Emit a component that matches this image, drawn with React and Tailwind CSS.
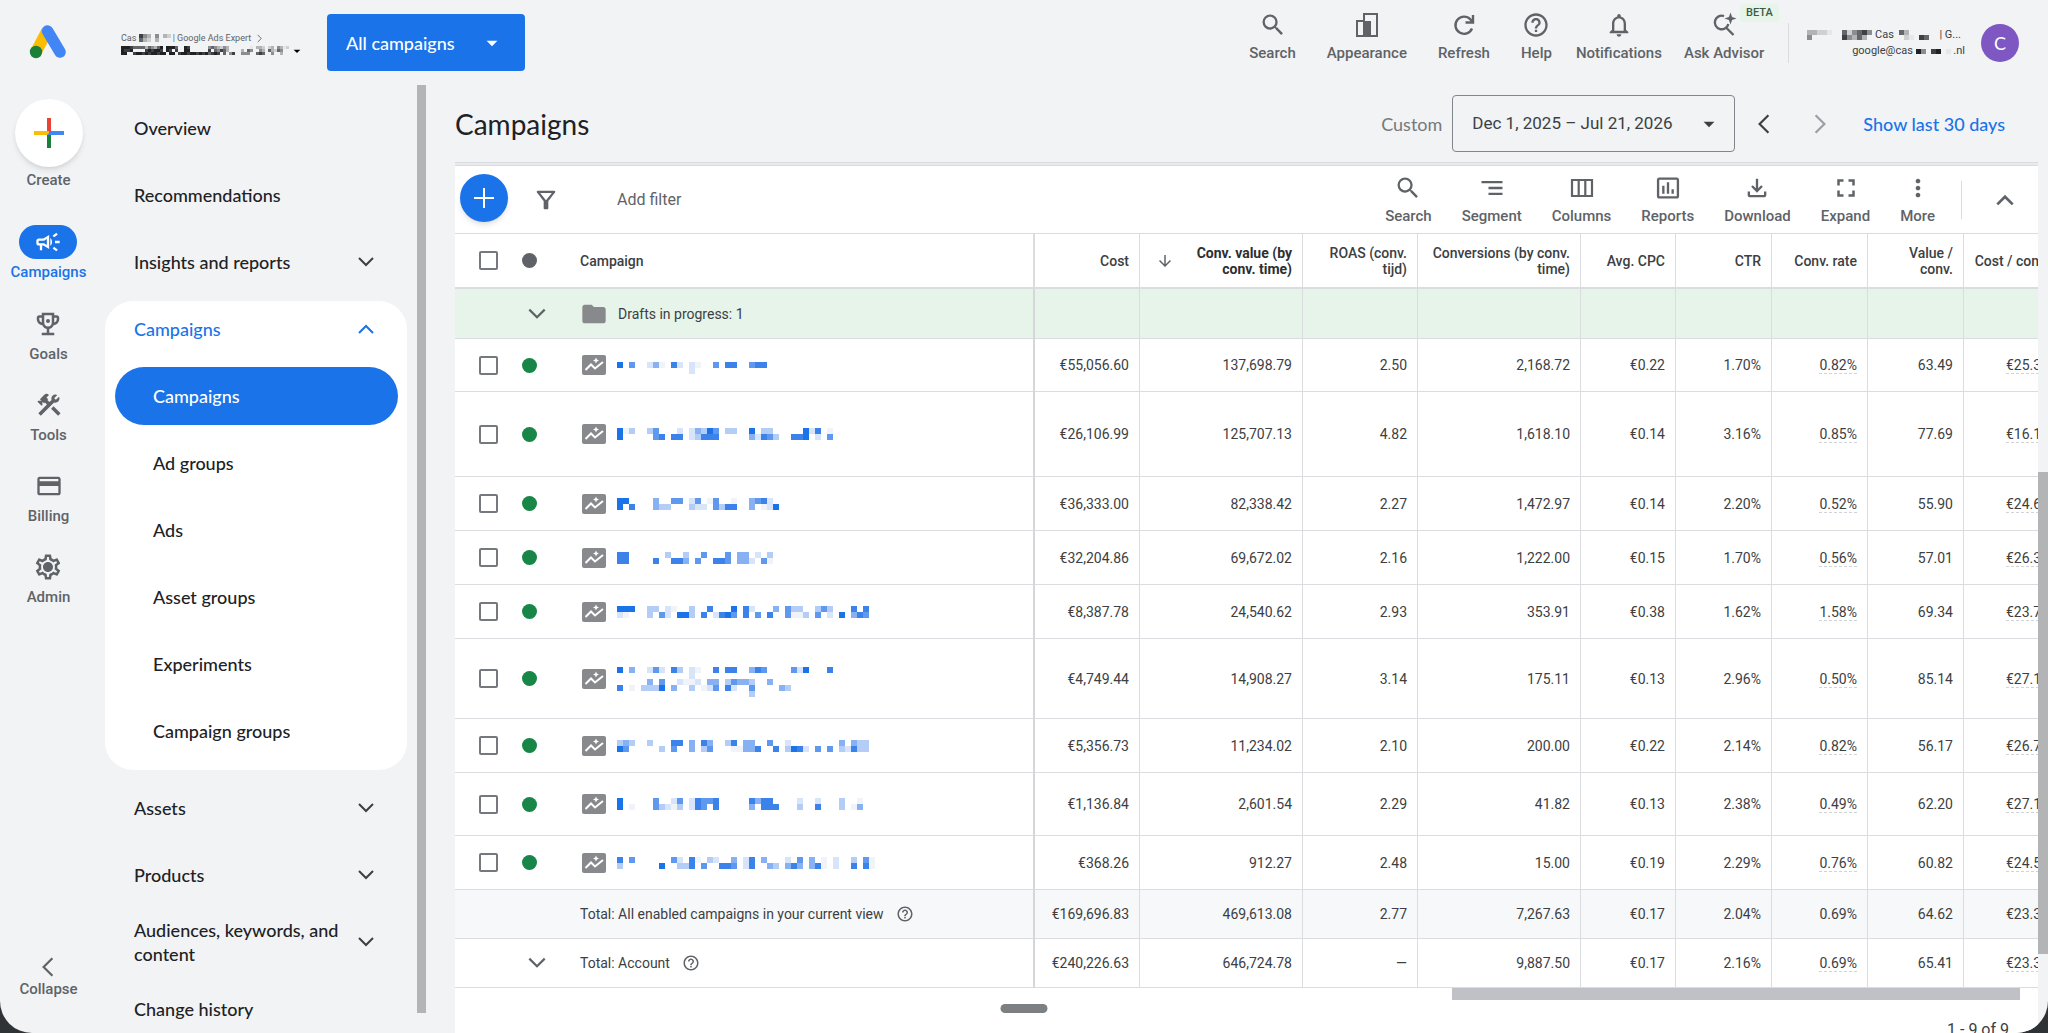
import React from "react";
import {
  MdSearch, MdHelpOutline, MdNotificationsNone, MdSegment, MdOutlineFileDownload,
  MdFullscreen, MdMoreVert, MdFolder, MdOutlineCampaign, MdConstruction, MdOutlineCreditCard,
  MdOutlineEmojiEvents, MdOutlineSettings, MdArrowDropDown, MdArrowDownward, MdInsertChartOutlined,
  MdOutlineFilterAlt,
} from "react-icons/md";

const SHADES = ["", "#f0f3f8", "#d7e4f9", "#b3cdf6", "#87b1f3", "#5e98ef", "#3b82eb", "#1a73e8"];
const GREYS = ["", "#e6e7e9", "#cfd0d2", "#b2b3b6", "#8c8d90", "#65666a", "#3f4044", "#202124"];

function Mosaic({ rows, shades = SHADES, cell = 6 }) {
  const cols = Math.max(...rows.map((r) => r.length));
  return (
    <svg width={cols * cell} height={rows.length * cell} shapeRendering="crispEdges" aria-hidden="true" className="shrink-0">
      {rows.flatMap((row, y) =>
        [...row].map((c, x) =>
          c === "." ? null : <rect key={x + "-" + y} x={x * cell} y={y * cell} width={cell} height={cell} fill={shades[+c]} />
        )
      )}
    </svg>
  );
}

function Chevron({ dir = "down", className = "", size = 20, stroke = 2 }) {
  const d = { down: "M3 6l7 7 7-7", up: "M3 14l7-7 7 7", left: "M14 2l-8 8 8 8", right: "M6 2l8 8-8 8" }[dir];
  return (
    <svg width={size} height={size} viewBox="0 0 20 20" fill="none" stroke="currentColor" strokeWidth={stroke} className={"shrink-0 " + className} aria-hidden="true">
      <path d={d} />
    </svg>
  );
}

function AdsLogo() {
  return (
    <svg width="38" height="36" viewBox="0 0 38 36" aria-label="Google Ads" role="img">
      <path d="M18 7 L7.5 27" stroke="#fbbc04" strokeWidth="11.5" strokeLinecap="butt" />
      <path d="M18.5 7 L31 28" stroke="#4285f4" strokeWidth="11.5" strokeLinecap="round" />
      <circle cx="7" cy="28" r="6.2" fill="#188038" />
    </svg>
  );
}

function AppearanceIcon() {
  return (
    <svg width="26" height="26" viewBox="0 0 26 26" fill="none" stroke="currentColor" strokeWidth="2" aria-hidden="true">
      <path d="M10 9V2h13v22H3V9z" />
      <path d="M9 9h8v15H9z" fill="currentColor" stroke="none" />
    </svg>
  );
}

function RefreshIcon() {
  return (
    <svg width="26" height="26" viewBox="0 0 26 26" fill="none" stroke="currentColor" strokeWidth="2.4" aria-hidden="true">
      <path d="M21 16.5A8.6 8.6 0 1 1 19.5 7.5L21.5 9.8M22 3v7.5h-7.5" />
    </svg>
  );
}

function AdvisorIcon() {
  return (
    <svg width="26" height="26" viewBox="0 0 26 26" fill="none" stroke="currentColor" strokeWidth="2.4" aria-hidden="true">
      <path d="M13 4.1a6.8 6.8 0 1 0 4.3 7.8M15 15.5l7.5 7.5" />
      <path d="M19.5 0.5l1.6 4.4 4.4 1.6-4.4 1.6-1.6 4.4-1.6-4.4-4.4-1.6 4.4-1.6z" fill="currentColor" stroke="none" />
    </svg>
  );
}

function ColumnsIcon() {
  return (
    <svg width="26" height="26" viewBox="0 0 26 26" fill="none" stroke="currentColor" strokeWidth="2.2" aria-hidden="true">
      <path d="M3 5h20v16H3zM9.7 5v16M16.3 5v16" />
    </svg>
  );
}

function CampaignTypeIcon() {
  return (
    <svg width="24" height="20" viewBox="0 0 24 20" className="shrink-0" aria-hidden="true">
      <rect width="24" height="20" rx="2" fill="#87898c" />
      <path d="M3.5 15l5.5-5.5 4 4L21 7" fill="none" stroke="#fff" strokeWidth="2" />
      <path d="M14 2.5l.9 2.1 2.1.9-2.1.9-.9 2.1-.9-2.1-2.1-.9 2.1-.9z" fill="#fff" />
    </svg>
  );
}

const TOP_ACTIONS = [
  ["Search", <MdSearch size={28} />],
  ["Appearance", <AppearanceIcon />],
  ["Refresh", <RefreshIcon />],
  ["Help", <MdHelpOutline size={28} />],
];

const TABLE_ACTIONS = [
  ["Search", <MdSearch size={28} />],
  ["Segment", <MdSegment size={28} />],
  ["Columns", <ColumnsIcon />],
  ["Reports", <MdInsertChartOutlined size={28} />],
  ["Download", <MdOutlineFileDownload size={28} />],
  ["Expand", <MdFullscreen size={30} />],
  ["More", <MdMoreVert size={28} />],
];

const RAIL = [
  ["Goals", <span className="relative"><MdOutlineEmojiEvents size={30} /><span className="absolute top-[10px] left-[13px] size-1 rounded-full bg-[#5f6368]" /></span>],
  ["Tools", <MdConstruction size={28} />],
  ["Billing", <MdOutlineCreditCard size={28} />],
  ["Admin", <span className="relative"><MdOutlineSettings size={30} /><span className="absolute top-[11px] left-[11px] size-2 rounded-full bg-[#5f6368]" /></span>],
];

const COLUMNS = ["Cost", "Conv. value (by conv. time)", "ROAS (conv. tijd)", "Conversions (by conv. time)", "Avg. CPC", "CTR", "Conv. rate", "Value / conv.", "Cost / conv."];

const ROWS = [
  { h: "h-[53px]", m: ["", "7.5..241.62.21..5.66..566", "............2"], v: ["€55,056.60", "137,698.79", "2.50", "2,168.72", "€0.22", "1.70%", "0.82%", "63.49", "€25.39"] },
  { h: "h-[85px]", m: ["713..35...2.24375.33..7.33.....726.1", "7.....56.66.23666.....42653..667.2.5"], v: ["€26,106.99", "125,707.13", "4.82", "1,618.10", "€0.14", "3.16%", "0.85%", "77.69", "€16.13"] },
  { h: "h-[54px]", m: ["77....4..55.25.15..1..4562", "7.6...433...322.5366..4.127"], v: ["€36,333.00", "82,338.42", "2.27", "1,472.97", "€0.14", "2.20%", "0.52%", "55.90", "€24.67"] },
  { h: "h-[54px]", m: ["66......3..3..5...5.44.2.3", "66....6..664.5..665.442.51"], v: ["€32,204.86", "69,672.02", "2.16", "1,222.00", "€0.15", "1.70%", "0.56%", "57.01", "€26.35"] },
  { h: "h-[54px]", m: ["777..33.21..3..6...7.62...4.533..353...6.6", "21...3.52.773.6.2675.6.5.6..5113.5.2.7.465"], v: ["€8,387.78", "24,540.62", "2.93", "353.91", "€0.38", "1.62%", "1.58%", "69.34", "€23.70"] },
  { h: "h-[80px]", m: ["", "7.4..252.63.21..6.66..465....527...6", "............2", ".....4.5..2112.44.35443..4", "6.1.3337.4..3.125.62..5....43", "......................3"], v: ["€4,749.44", "14,908.27", "3.14", "175.11", "€0.13", "2.96%", "0.50%", "85.14", "€27.12"] },
  { h: "h-[54px]", m: ["343..3...66.4.64..36.44..5..2........4.433", "75.....3.5..4.35...11446..6.3762.5.5.32633"], v: ["€5,356.73", "11,234.02", "2.10", "200.00", "€0.22", "2.14%", "0.82%", "56.17", "€26.78"] },
  { h: "h-[63px]", m: ["7.....5..25.26556.....6466....2..2...3..1", "7.1...53213.265.6.....4.666...3..6...3.14"], v: ["€1,136.84", "2,601.54", "2.29", "41.82", "€0.13", "2.38%", "0.49%", "62.20", "€27.18"] },
  { h: "h-[54px]", m: ["6.5......52.61.32..4.26.4...2.5.4.1.2..3.51", "3......7..336.5..665.26..43.464.461.2..6.61"], v: ["€368.26", "912.27", "2.48", "15.00", "€0.19", "2.29%", "0.76%", "60.82", "€24.55"] },
];

const TOTALS = [
  { label: "Total: All enabled campaigns in your current view", bg: "bg-[#f7f8fa]", v: ["€169,696.83", "469,613.08", "2.77", "7,267.63", "€0.17", "2.04%", "0.69%", "64.62", "€23.35"] },
  { label: "Total: Account", expand: true, bg: "bg-white", v: ["€240,226.63", "646,724.78", "—", "9,887.50", "€0.17", "2.16%", "0.69%", "65.41", "€23.38"] },
];

function IconAction({ label, icon, children }) {
  return (
    <button type="button" className="relative flex flex-col items-center text-[#5f6368]">
      <span className="flex h-7 items-center">{icon}</span>
      <span className="mt-1 text-[15px] leading-5 font-medium whitespace-nowrap">{label}</span>
      {children}
    </button>
  );
}

function RailItem({ label, icon }) {
  return (
    <button type="button" className="flex h-[81px] flex-col items-center text-[#5f6368]">
      <span className="flex h-[34px] items-center">{icon}</span>
      <span className="mt-[3px] text-[15px] leading-5 font-medium">{label}</span>
    </button>
  );
}

function NavGroup({ label }) {
  return (
    <button type="button" className="flex h-[67px] w-full items-center justify-between pr-[31px] pl-[29px] text-left">
      <span className="max-w-[215px]">{label}</span>
      <Chevron className="text-[#3c4043]" />
    </button>
  );
}

function Num({ children, dashed }) {
  return (
    <td className="border-r border-b border-[#dadce0] px-[10px] text-right">
      <span className={dashed ? "border-b border-dashed border-[#d0d3d7]" : ""}>{children}</span>
    </td>
  );
}

const NAME_EDGE = "border-r-2 border-b border-r-[#d5d6da] border-b-[#dadce0]";

function CampaignTable() {
  return (
    <table className="w-[calc(100%+22px)] table-fixed border-separate border-spacing-0 text-sm leading-4 text-[#3c4043]">
      <colgroup>
        <col className="w-[125px]" />
        <col />
        <col className="w-[105px]" />
        <col className="w-[163px]" />
        <col className="w-[115px]" />
        <col className="w-[163px]" />
        <col className="w-[95px]" />
        <col className="w-24" />
        <col className="w-24" />
        <col className="w-24" />
        <col className="w-24" />
      </colgroup>
      <thead>
        <tr className="h-[55px] text-[#3c4043]">
          <th className="border-b-2 border-[#dadce0] pl-6">
            <span className="flex items-center gap-6">
              <input type="checkbox" aria-label="Select all campaigns" className="size-[19px] appearance-none rounded-xs border-2 border-[#75787c]" />
              <span className="size-[15px] rounded-full bg-[#5f6368]" />
            </span>
          </th>
          <th className="border-r-2 border-b-2 border-[#dadce0] text-left font-medium">Campaign</th>
          {COLUMNS.map((c, i) => (
            <th key={c} className="border-r border-b-2 border-[#dadce0] px-[10px] text-right font-medium">
              {i === 1 ? (
                <span className="flex items-center gap-2 pl-1.5">
                  <MdArrowDownward size={18} className="shrink-0 text-[#5f6368]" />
                  <span className="flex-1 font-bold text-[#2d2f33]">{c}</span>
                </span>
              ) : (
                <span className={i === 8 ? "whitespace-nowrap" : ""}>{c}</span>
              )}
            </th>
          ))}
        </tr>
      </thead>
      <tbody>
        <tr className="h-[50px] bg-[#e6f4ea]">
          <td className="border-b border-[#dadce0] pl-[71px]">
            <button type="button" aria-label="Expand drafts" className="block text-[#5f6368]"><Chevron size={22} /></button>
          </td>
          <td className={NAME_EDGE}>
            <span className="flex items-center gap-[10px]">
              <MdFolder size={28} className="text-[#87898c]" />
              Drafts in progress: 1
            </span>
          </td>
          {COLUMNS.map((c) => <td key={c} className="border-r border-b border-[#dadce0]" />)}
        </tr>
        {ROWS.map((r, i) => (
          <tr key={i} className={r.h}>
            <td className="border-b border-[#dadce0] pl-6">
              <span className="flex items-center gap-6">
                <input type="checkbox" aria-label={"Select campaign " + (i + 1)} className="size-[19px] appearance-none rounded-xs border-2 border-[#75787c]" />
                <span className="size-[15px] rounded-full bg-[#188647]" />
              </span>
            </td>
            <td className={NAME_EDGE}>
              <a href="#campaign" className="flex items-center gap-[11px] pl-0.5" aria-label={"Campaign " + (i + 1)}>
                <CampaignTypeIcon />
                <Mosaic rows={r.m} />
              </a>
            </td>
            {r.v.map((v, j) => <Num key={j} dashed={j === 6 || j === 8}>{v}</Num>)}
          </tr>
        ))}
        {TOTALS.map((t) => (
          <tr key={t.label} className={"h-[49px] " + t.bg}>
            <td className="border-b border-[#dadce0] pl-[71px]">
              {t.expand && <button type="button" aria-label="Expand account total" className="block text-[#5f6368]"><Chevron size={22} /></button>}
            </td>
            <td className={NAME_EDGE}>
              <span className="flex items-center gap-3">
                {t.label}
                <MdHelpOutline size={18} className="text-[#5f6368]" />
              </span>
            </td>
            {t.v.map((v, j) => <Num key={j} dashed={t.expand && (j === 6 || j === 8)}>{v}</Num>)}
          </tr>
        ))}
      </tbody>
    </table>
  );
}

const ACCOUNT_NAME = [
  "77765555354357.7775..76......4543243.......1.332.23.4312",
  "7667....676776.76.6..77......6.54653....3.54..43.53254..",
  "77..67767677677.77.67767767675676.5.46..444..565..4..3..",
];

function TopBar() {
  return (
    <header className="flex h-[85px] shrink-0 items-start pr-[29px] pl-[29px]">
      <div className="mt-6"><AdsLogo /></div>
      <button type="button" className="mt-[30px] ml-[54px] w-[184px] text-left">
        <span className="flex items-center text-[9px] leading-4 whitespace-nowrap text-[#5f6368]">
          Cas&nbsp;
          <Mosaic rows={["643.4.32", "532.3..."]} shades={GREYS} cell={4} />
          <span className="ml-0.5">| Google Ads Expert</span>
          <Chevron dir="right" size={9} className="ml-1" />
        </span>
        <span className="flex h-[9px] items-center justify-between">
          <Mosaic rows={ACCOUNT_NAME} shades={GREYS} cell={3} />
          <MdArrowDropDown size={16} />
        </span>
      </button>
      <button type="button" className="mt-[14px] ml-[22px] flex h-[57px] w-[198px] items-center justify-between rounded bg-[#1a73e8] pr-5 pl-[19px] font-['Lato'] text-lg font-medium text-white">
        All campaigns
        <MdArrowDropDown size={26} />
      </button>
      <div className="mt-[11px] ml-auto flex gap-6">
        <div className="flex gap-[31px]">
          {TOP_ACTIONS.map(([label, icon]) => <IconAction key={label} label={label} icon={icon} />)}
        </div>
        <div className="flex gap-[22px]">
          <IconAction label="Notifications" icon={<MdNotificationsNone size={28} />} />
          <IconAction label="Ask Advisor" icon={<AdvisorIcon />}>
            <span className="absolute -top-[7px] left-14 rounded-sm bg-[#e6f4ea] px-1.5 text-[11px] leading-[18px] font-medium text-[#3c5a46]">BETA</span>
          </IconAction>
        </div>
      </div>
      <div className="mt-[23px] ml-6 flex h-10 items-center border-l border-[#dadce0] pl-[18px]">
        <div className="flex flex-col items-end text-[11px] leading-4 text-[#3c4043]">
          <span className="mr-1 flex items-center">
            <Mosaic rows={["33221..524564", "4......64353."]} shades={GREYS} cell={5} />
            &nbsp;Cas&nbsp;&nbsp;
            <Mosaic rows={["53....", ".21.65"]} shades={GREYS} cell={5} />
            <span className="ml-[10px]">| G...</span>
          </span>
          <span className="flex items-center">google@cas&nbsp;<Mosaic rows={["74.67.1"]} shades={GREYS} cell={5} />&nbsp;.nl</span>
        </div>
        <span className="ml-4 flex size-[38px] items-center justify-center rounded-full bg-[#7e57c2] font-['Lato'] text-lg text-white">C</span>
      </div>
    </header>
  );
}

function Sidebar() {
  return (
    <nav aria-label="Sections" className="flex w-[97px] shrink-0 flex-col items-center pt-[14px] pb-[34px]">
      <button type="button" className="flex flex-col items-center text-[#5f6368]">
        <span className="flex size-[68px] items-center justify-center rounded-full bg-white shadow-md">
          <svg width="30" height="30" viewBox="0 0 30 30" aria-hidden="true">
            <path d="M13 0h4v15l-4 0z" fill="#ea4335" />
            <path d="M0 13h15v4H0z" fill="#fbbc04" />
            <path d="M13 17h4v13h-4z" fill="#188038" />
            <path d="M13 17l4-4h13v4z" fill="#4285f4" />
          </svg>
        </span>
        <span className="mt-[3px] text-[15px] leading-5 font-medium">Create</span>
      </button>
      <button type="button" className="mt-[35px] flex h-[82px] flex-col items-center text-[#1a73e8]">
        <span className="flex h-[34px] w-[58px] items-center justify-center rounded-full bg-[#1a73e8] text-white">
          <MdOutlineCampaign size={28} />
        </span>
        <span className="mt-[3px] text-[15px] leading-5 font-medium">Campaigns</span>
      </button>
      {RAIL.map(([label, icon]) => <RailItem key={label} label={label} icon={icon} />)}
      <button type="button" className="mt-auto flex flex-col items-center text-[#5f6368]">
        <Chevron dir="left" size={22} />
        <span className="mt-px text-[15px] leading-5 font-medium">Collapse</span>
      </button>
    </nav>
  );
}

const SUB_ITEMS = ["Ad groups", "Ads", "Asset groups", "Experiments", "Campaign groups"];

function NavPanel() {
  return (
    <nav aria-label="Pages" className="flex w-[310px] shrink-0 flex-col overflow-hidden pl-2 font-['Lato'] text-lg leading-6 font-medium text-[#202124]">
      <div className="pt-[9px]">
        <a href="#overview" className="flex h-[67px] items-center pl-[29px]">Overview</a>
        <a href="#recommendations" className="flex h-[67px] items-center pl-[29px]">Recommendations</a>
        <NavGroup label="Insights and reports" />
      </div>
      <div className="mt-1.5 flex h-[469px] shrink-0 flex-col rounded-[28px] bg-white">
        <button type="button" className="flex h-14 items-center justify-between pr-[31px] pl-[29px] text-[#1a73e8]">
          Campaigns
          <Chevron dir="up" />
        </button>
        <a href="#campaigns" className="mt-[10px] mr-[9px] ml-[10px] flex h-[58px] items-center rounded-full bg-[#1a73e8] pl-[38px] text-white">Campaigns</a>
        <div className="mt-1 pl-12">
          {SUB_ITEMS.map((s) => <a key={s} href="#sub" className="flex h-[67px] items-center">{s}</a>)}
        </div>
      </div>
      <div className="pt-1">
        <NavGroup label="Assets" />
        <NavGroup label="Products" />
        <NavGroup label="Audiences, keywords, and content" />
        <a href="#history" className="flex h-[67px] items-center pl-[29px]">Change history</a>
      </div>
    </nav>
  );
}

export default function App() {
  return (
    <div className="h-screen overflow-hidden bg-[#303336] font-['Roboto',sans-serif]">
      <div className="relative flex h-full flex-col overflow-hidden rounded-b-[32px] bg-[#f1f3f5]">
        <TopBar />
        <div className="flex min-h-0 flex-1">
          <Sidebar />
          <NavPanel />
          <div className="mr-[29px] mb-5 ml-[10px] w-[9px] shrink-0 bg-[#b3b4b6]" />
          <main className="flex min-w-0 flex-1 flex-col overflow-hidden">
            <div className="flex h-[77px] shrink-0 items-center pr-[33px] font-['Lato'] text-lg">
              <h1 className="text-[28px] leading-8 text-[#202124]">Campaigns</h1>
              <span className="ml-auto text-[#75787c]">Custom</span>
              <button type="button" className="ml-[10px] flex h-[57px] w-[283px] items-center justify-between rounded border border-[#80868b] pr-3 pl-[19px] font-['Roboto'] text-[17px] text-[#3c4043]">
                Dec 1, 2025 – Jul 21, 2026
                <MdArrowDropDown size={26} />
              </button>
              <button type="button" aria-label="Previous period" className="ml-[18px] text-[#3c4043]"><Chevron dir="left" size={22} /></button>
              <button type="button" aria-label="Next period" className="ml-[34px] text-[#9aa0a6]"><Chevron dir="right" size={22} /></button>
              <a href="#last30" className="ml-8 font-medium text-[#1a73e8]">Show last 30 days</a>
            </div>
            <div className="h-1 shrink-0 border-y border-[#dadce0] bg-[#e8eaed]" />
            <div className="flex min-h-0 flex-1 flex-col bg-white">
              <div className="flex h-[68px] shrink-0 items-center border-b border-[#dadce0] pr-[22px] pl-[5px]">
                <button type="button" aria-label="New campaign" className="-mt-1 flex size-12 items-center justify-center rounded-full bg-[#1a73e8] text-white shadow-md">
                  <svg width="20" height="20" viewBox="0 0 20 20" stroke="currentColor" strokeWidth="2" aria-hidden="true"><path d="M10 0v20M0 10h20" /></svg>
                </button>
                <button type="button" aria-label="Filter" className="ml-6 text-[#5f6368]"><MdOutlineFilterAlt size={28} /></button>
                <button type="button" className="ml-[57px] text-base text-[#5f6368]">Add filter</button>
                <div className="ml-auto flex gap-[30px]">
                  {TABLE_ACTIONS.map(([label, icon]) => <IconAction key={label} label={label} icon={icon} />)}
                </div>
                <div className="ml-[26px] flex h-[38px] items-center border-l border-[#dadce0] pl-8">
                  <button type="button" aria-label="Collapse toolbar" className="text-[#5f6368]"><Chevron dir="up" size={22} stroke={2.4} /></button>
                </div>
              </div>
              <div className="shrink-0 overflow-hidden"><CampaignTable /></div>
              <div className="mr-[18px] h-3 w-[568px] shrink-0 self-end bg-[#bfc1c6]" />
              <p className="mt-5 mr-[29px] shrink-0 self-end text-base leading-5 text-[#3c4043]">1 - 9 of 9</p>
            </div>
          </main>
          <div className="flex w-[10px] shrink-0 flex-col">
            <div className="grow-[387]" />
            <div className="grow-[482] bg-[#b3b4b6]" />
            <div className="grow-[79]" />
          </div>
        </div>
        <div className="absolute bottom-5 left-1/2 h-[9px] w-[47px] -translate-x-1/2 rounded-full bg-[#7d8082]" />
      </div>
    </div>
  );
}
